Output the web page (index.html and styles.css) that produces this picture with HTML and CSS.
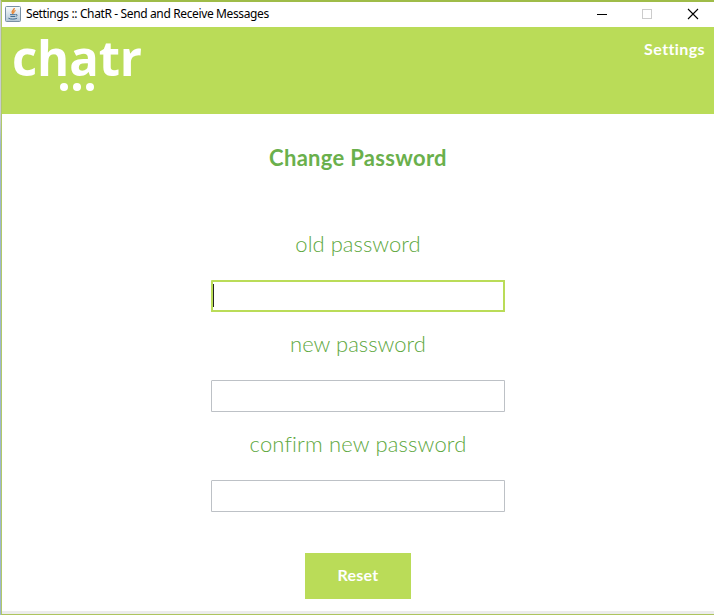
FILE: index.html
```
<!DOCTYPE html>
<html lang="en">
<head>
<meta charset="utf-8">
<title>Settings :: ChatR - Send and Receive Messages</title>
<link rel="stylesheet" href="styles.css">
</head>
<body>
<div class="desktop">
  <div class="window">
    <div class="titlebar">
      <svg class="app-icon" width="16" height="16" viewBox="0 0 16 16">
        <defs><linearGradient id="tile" x1="0" y1="0" x2="0" y2="1"><stop offset="0" stop-color="#fafcfd"/><stop offset="1" stop-color="#b4c7d6"/></linearGradient></defs>
        <rect x=".5" y=".5" width="15" height="15" rx="1" fill="url(#tile)" stroke="#7890a5"/>
        <path d="M9.3 2C9.500 4 6.200 4.700 7.200 6.600L8 8M10.600 4.500C8.500 5.500 8.300 6 9 7.300" fill="none" stroke="#e7812c" stroke-width="1.3"/>
        <path d="M5 8.700h5.500M5.400 10.500h4.700M3.400 12.200c2 1.200 6.500 1.200 8.700 0M10.700 8.400c2.200-.2 1.700 1.700 0 2" fill="none" stroke="#426d91"/>
      </svg>
      <span class="title">Settings :: ChatR - Send and Receive Messages</span>
      <svg class="controls" width="120" height="25" viewBox="0 0 120 25" fill="none" shape-rendering="crispEdges">
        <path d="M6 12.5h10" stroke="#000"/>
        <rect x="51.500" y="7.500" width="9" height="9" stroke="#ccc"/>
        <path d="M97 7l10 10M107 7l-10 10" stroke="#000" stroke-width="1.1" shape-rendering="auto"/>
      </svg>
    </div>
    <header class="header">
      <div class="logo">
        <span class="wordmark">chatr</span>
        <span class="dots"><i></i><i></i><i></i></span>
      </div>
      <a class="nav">Settings</a>
    </header>
    <main class="form">
      <h1>Change Password</h1>
      <label class="old" for="old">old password</label>
      <div class="field focused" id="old"><span class="caret"></span></div>
      <label class="new" for="new">new password</label>
      <div class="field" id="new"></div>
      <label class="confirm" for="confirm">confirm new password</label>
      <div class="field" id="confirm"></div>
      <button type="button"><span>Reset</span></button>
    </main>
    <div class="frame-bottom"></div>
  </div>
</div>
</body>
</html>
```
FILE: styles.css
```
* { box-sizing: border-box; }
body { margin: 0; overflow: hidden; }
.desktop { width: 714px; height: 615px; padding-left: 1px; background: linear-gradient(#c9ccd1 0, #c9ccd1 120px, #9fb5d0 145px, #9fb5d0 100%); }
.window { height: 615px; display: flex; flex-direction: column; background: #fff; border-top: 2px solid #9fbc48; border-left: 1px solid #b0c968; border-bottom: 1px solid #adc45d; }
.titlebar { height: 25px; flex: none; display: flex; align-items: center; padding-left: 3px; font: 12px/24px "Noto Sans", sans-serif; color: #000; }
.app-icon { margin-top: -1px; }
.title { position: relative; top: -1px; margin-left: 5px; letter-spacing: -.37px; white-space: nowrap; }
.controls { margin-left: auto; margin-right: 3px; }
.header { height: 87px; flex: none; display: flex; justify-content: space-between; background: #badc58; color: #fff; }
.logo { padding-left: 10px; width: 150px; }
.wordmark { display: block; height: 55px; font: bold 49px/61px "Open Sans", sans-serif; letter-spacing: -.1px; }
.dots { display: flex; gap: 5px; padding: 1px 0 0 48px; }
.dots i { width: 8px; height: 8px; border-radius: 50%; background: #fff; }
.nav { padding: 12px 9px 0 0; font: bold 16px/20px Lato, sans-serif; letter-spacing: .4px; font-variant-ligatures: none; }
.form { flex: 1; display: flex; flex-direction: column; align-items: center; color: #6ab04c; font-family: Lato, sans-serif; }
h1 { margin: 30px 0 57px; font-size: 22px; line-height: 28px; font-weight: bold; letter-spacing: .3px; white-space: nowrap; }
label { height: 30px; line-height: 30px; font-size: 22px; font-weight: 300; letter-spacing: .03px; font-variant-ligatures: none; color: #5ea83e; margin-bottom: 21px; white-space: nowrap; }
.confirm { letter-spacing: .15px; }
.field { width: 294px; height: 32px; flex: none; border: 1px solid #bdc1c6; border-top-left-radius: 1px; margin-bottom: 17px; background: #fff; }
.field.focused { border: 2px solid #badc58; }
.caret { display: block; width: 1px; height: 23px; margin-top: 2px; background: #222; }
button { width: 106px; height: 46px; flex: none; margin-top: 24px; border: 0; padding: 0 0 2px; background: #badc58; color: #fff; font: bold 16px/20px Lato, sans-serif; letter-spacing: .3px; }
.frame-bottom { height: 3px; flex: none; background: #ececec; }
```
